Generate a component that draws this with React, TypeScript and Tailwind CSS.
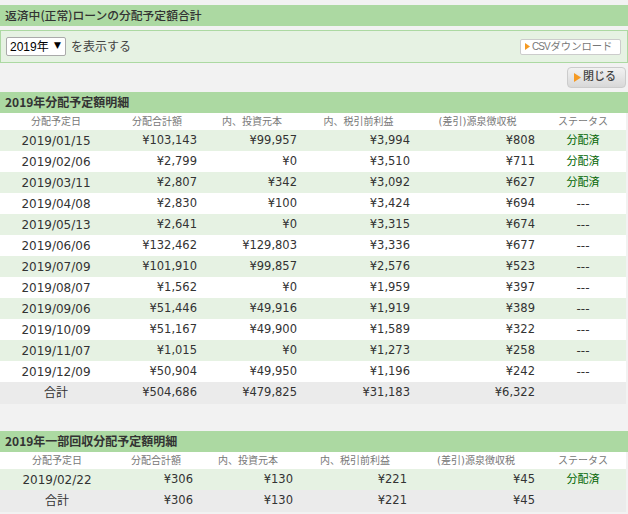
const font = { fontFamily: '"DejaVu Sans", "Noto Sans CJK JP", sans-serif' }

type Row = [string, string, string, string, string, string]

const rows: Row[] = [
  ['2019/01/15', '¥103,143', '¥99,957', '¥3,994', '¥808', '分配済'],
  ['2019/02/06', '¥2,799', '¥0', '¥3,510', '¥711', '分配済'],
  ['2019/03/11', '¥2,807', '¥342', '¥3,092', '¥627', '分配済'],
  ['2019/04/08', '¥2,830', '¥100', '¥3,424', '¥694', '---'],
  ['2019/05/13', '¥2,641', '¥0', '¥3,315', '¥674', '---'],
  ['2019/06/06', '¥132,462', '¥129,803', '¥3,336', '¥677', '---'],
  ['2019/07/09', '¥101,910', '¥99,857', '¥2,576', '¥523', '---'],
  ['2019/08/07', '¥1,562', '¥0', '¥1,959', '¥397', '---'],
  ['2019/09/06', '¥51,446', '¥49,916', '¥1,919', '¥389', '---'],
  ['2019/10/09', '¥51,167', '¥49,900', '¥1,589', '¥322', '---'],
  ['2019/11/07', '¥1,015', '¥0', '¥1,273', '¥258', '---'],
  ['2019/12/09', '¥50,904', '¥49,950', '¥1,196', '¥242', '---'],
]

const partial: Row[] = [['2019/02/22', '¥306', '¥130', '¥221', '¥45', '分配済']]

function Triangle({ w, h }: { w: number; h: number }) {
  return (
    <svg width={w} height={h} viewBox="0 0 7 9" preserveAspectRatio="none" className="shrink-0">
      <path d="M0 0L7 4.5L0 9Z" fill="#f59a23" />
    </svg>
  )
}

function SectionTitle({ children, bold }: { children: React.ReactNode; bold?: boolean }) {
  return (
    <div
      className={`flex h-[21px] items-center bg-[#acd9a2] pb-px pl-[5px] font-['Noto_Sans_CJK_JP'] text-[#333] ${bold ? 'text-[12px] font-bold' : 'text-[11.8px] font-medium'}`}
    >
      {children}
    </div>
  )
}

function DetailTable({ data, total, grid }: { data: Row[]; total: string[]; grid: string }) {
  const headers = ['分配予定日', '分配合計額', '内、投資元本', '内、税引前利益', '(差引)源泉徴収税', 'ステータス']
  return (
    <div className="mr-[2px]">
      <div className={`grid h-[17px] items-center bg-white text-center text-[10px] text-[#777] ${grid}`}>
        {headers.map((h) => (
          <div key={h}>{h}</div>
        ))}
      </div>
      {data.map((r, i) => (
        <div
          key={r[0]}
          className={`grid h-[21px] items-center text-[11.5px] text-[#333] ${grid} ${i % 2 === 0 ? 'bg-[#e6f2e3]' : 'bg-white'}`}
        >
          <div className="text-center text-[12px]">{r[0]}</div>
          <div className="pr-[5px] text-right">{r[1]}</div>
          <div className="pr-[5px] text-right">{r[2]}</div>
          <div className="pr-[5px] text-right">{r[3]}</div>
          <div className="pr-[5px] text-right">{r[4]}</div>
          <div className={`text-center ${r[5] === '---' ? 'text-[12px]' : 'pt-px text-[11px] text-[#006400]'}`}>{r[5]}</div>
        </div>
      ))}
      <div className={`grid h-[22px] items-center bg-[#ebebeb] text-[11.5px] text-[#333] ${grid}`}>
        <div className="text-center text-[12px]">合計</div>
        <div className="pr-[5px] text-right">{total[0]}</div>
        <div className="pr-[5px] text-right">{total[1]}</div>
        <div className="pr-[5px] text-right">{total[2]}</div>
        <div className="pr-[5px] text-right">{total[3]}</div>
        <div></div>
      </div>
    </div>
  )
}

export default function App() {
  return (
    <div className="h-[514px] w-[628px] overflow-hidden bg-[#f2f2f2] pt-[5px]" style={font}>
      <SectionTitle>返済中(正常)ローンの分配予定額合計</SectionTitle>

      {/* Year filter */}
      <div className="mt-1 flex h-[33px] items-center border border-[#acd9a2] bg-[#e6f2e3] pl-[5px] pr-[6px] text-[12px] text-[#444]">
        <div className="relative h-[19px] w-[60px]">
          <select className="h-full w-full appearance-none rounded-[2px] border border-[#aaa] bg-white pl-[3px] font-['Liberation_Sans','Noto_Sans_CJK_JP'] text-[12px] text-black">
            <option>2019年</option>
          </select>
          <span className="pointer-events-none absolute right-[5px] top-[2px] text-[9px] text-black">▼</span>
        </div>
        <span className="ml-[5px]">を表示する</span>
        <button className="ml-auto flex h-[16px] w-[101px] items-center rounded-[2px] border border-[#ccc] bg-white pl-1 text-[10.3px] text-[#777]">
          <Triangle w={5} h={7} />
          <span className="ml-[2px] font-['Liberation_Sans'] text-[10px] tracking-[-1px]">CSV</span>
          <span className="ml-px">ダウンロード</span>
        </button>
      </div>

      <div className="mr-[2px] mt-1 flex justify-end">
        <button className="flex h-[21px] w-[59px] items-center gap-[2px] rounded-[4px] border border-[#ccc] bg-gradient-to-b from-[#f2f2f2] to-[#d8d8d8] pl-[6px] text-[11px] font-medium text-[#444]">
          <Triangle w={7} h={9} />
          閉じる
        </button>
      </div>

      <div className="mt-1">
        <SectionTitle bold>2019年分配予定額明細</SectionTitle>
        <DetailTable
          data={rows}
          total={['¥504,686', '¥479,825', '¥31,183', '¥6,322']}
          grid="grid-cols-[112px_90px_100px_113px_125px_86px]"
        />
      </div>

      <div className="mt-[27px]">
        <SectionTitle bold>2019年一部回収分配予定額明細</SectionTitle>
        <DetailTable
          data={partial}
          total={['¥306', '¥130', '¥221', '¥45']}
          grid="grid-cols-[114px_84px_100px_114px_128px_86px]"
        />
      </div>
    </div>
  )
}
